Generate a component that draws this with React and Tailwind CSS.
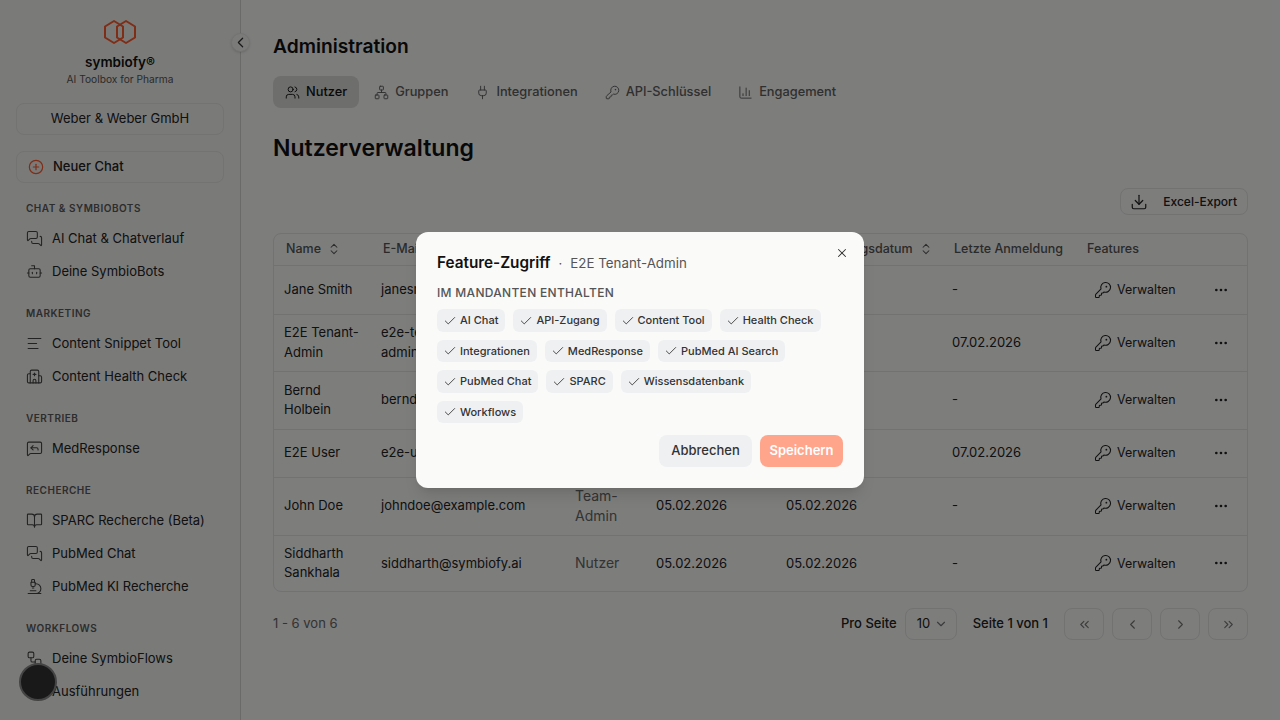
import React from "react";
import { MessagesSquare, Bot, AlignLeft, Hospital, MessageSquareReply, BookOpen, Microscope, Workflow, Play, Users, Network, Plug, KeyRound, ChartColumn, Check, X, Download, ChevronsUpDown, Ellipsis, ChevronDown, ChevronsLeft, ChevronsRight, ChevronLeft, ChevronRight, CirclePlus } from "lucide-react";

const sections = [
  ["CHAT & SYMBIOBOTS", [[MessagesSquare, "AI Chat & Chatverlauf"], [Bot, "Deine SymbioBots"]]],
  ["MARKETING", [[AlignLeft, "Content Snippet Tool"], [Hospital, "Content Health Check"]]],
  ["VERTRIEB", [[MessageSquareReply, "MedResponse"]]],
  ["RECHERCHE", [[BookOpen, "SPARC Recherche (Beta)"], [MessagesSquare, "PubMed Chat"], [Microscope, "PubMed KI Recherche"]]],
  ["WORKFLOWS", [[Workflow, "Deine SymbioFlows"], [Play, "Ausführungen"]]],
];

const tabs = [
  [Users, "Nutzer", true],
  [Network, "Gruppen"],
  [Plug, "Integrationen"],
  [KeyRound, "API-Schlüssel"],
  [ChartColumn, "Engagement"],
];

const rows = [
  ["h-[49px]", "Jane Smith", "janesmith@example.com", "Nutzer", "05.02.2026", "05.02.2026", "-"],
  ["h-[57px]", "E2E Tenant-Admin", "e2e-tenant-admin@symbiofy.ai", "Team-Admin", "05.02.2026", "05.02.2026", "07.02.2026"],
  ["h-[58px]", "Bernd Holbein", "bernd@symbiofy.ai", "Nutzer", "05.02.2026", "05.02.2026", "-"],
  ["h-[48px]", "E2E User", "e2e-user@symbiofy.ai", "Nutzer", "05.02.2026", "05.02.2026", "07.02.2026"],
  ["h-[58px]", "John Doe", "johndoe@example.com", "Team-Admin", "05.02.2026", "05.02.2026", "-"],
  ["h-[56px]", "Siddharth Sankhala", "siddharth@symbiofy.ai", "Nutzer", "05.02.2026", "05.02.2026", "-"],
];

const features = [
  ["AI Chat", "API-Zugang", "Content Tool", "Health Check"],
  ["Integrationen", "MedResponse", "PubMed AI Search"],
  ["PubMed Chat", "SPARC", "Wissensdatenbank"],
  ["Workflows"],
];

function Logo() {
  return (
    <svg width="32" height="24" viewBox="0 0 32 24" fill="none" stroke="#ff5a2c" strokeWidth="2" strokeLinejoin="round">
      <path d="M10 1 L19 6.5 V17.5 L10 23 L1 17.5 V6.5 Z" />
      <path d="M22 1 L31 6.5 V17.5 L22 23 L13 17.5 V6.5 Z" />
    </svg>
  );
}

function SortHead({ children }) {
  return (
    <span className="inline-flex items-center gap-[6px]">
      {children}
      <ChevronsUpDown size={14} strokeWidth={1.75} />
    </span>
  );
}

export default function App() {
  return (
    <div className="relative flex h-screen w-full overflow-hidden bg-[#fafaf9] font-['Inter',sans-serif] text-[#1c1c1c]">
      <aside className="relative flex w-[241px] shrink-0 flex-col border-r border-[#d4d4d2] bg-[#f4f4f2] px-4">
        <div className="flex flex-col items-center pt-5">
          <Logo />
          <div className="mt-[8px] text-[13.5px] leading-5 font-semibold text-[#111]">symbiofy®</div>
          <div className="text-[10.2px] leading-[15px] text-[#555]">AI Toolbox for Pharma</div>
        </div>
        <div className="mt-[16px] flex h-8 items-center justify-center rounded-lg border border-[#e6e6e4] text-[13px] text-[#222]">Weber &amp; Weber GmbH</div>
        <div className="mt-4 flex h-8 items-center gap-[9px] rounded-lg border border-[#e6e6e4] pl-[11px] text-[13px] font-medium text-[#222]">
          <CirclePlus size={16} strokeWidth={1.75} className="text-[#ff5a2c]" />
          Neuer Chat
        </div>
        <nav className="mt-[17px] flex flex-col gap-[17px]">
          {sections.map(([label, items]) => (
            <div key={label}>
              <div className="mb-[6px] pl-[10px] text-[10px] leading-4 font-semibold tracking-[0.05em] text-[#5a5a5a]">{label}</div>
              {items.map(([Icon, text]) => (
                <div key={text} className="flex h-[33px] items-center gap-[9px] pl-[10px] text-[13px] text-[#222]">
                  <Icon size={17} strokeWidth={1.5} className="text-[#444]" />
                  {text}
                </div>
              ))}
            </div>
          ))}
        </nav>
        <button className="absolute top-[33px] -right-[10px] flex h-[19px] w-[19px] items-center justify-center rounded-full border border-[#e8e8e6] bg-[#f7f7f5] text-[#333] shadow-sm">
          <ChevronLeft size={17} strokeWidth={1.75} />
        </button>
      </aside>

      <main className="flex min-w-0 flex-1 flex-col pt-[34px] pr-8 pl-8">
        <h1 className="text-[19.2px] leading-6 font-semibold text-[#111]">Administration</h1>
        <div className="mt-[18px] flex gap-[3px]">
          {tabs.map(([Icon, text, active]) => (
            <div key={text} className={"flex h-8 items-center gap-[6px] rounded-lg px-3 text-[12.8px] font-medium " + (active ? "bg-[#dcdcda] text-[#111]" : "text-[#5f5f5f]")}>
              <Icon size={15} strokeWidth={1.5} />
              {text}
            </div>
          ))}
        </div>
        <h2 className="mt-[24px] text-[23px] leading-8 font-semibold text-[#111]">Nutzerverwaltung</h2>
        <div className="mt-[24px] flex justify-end">
          <button className="flex h-[27px] w-[128px] items-center justify-between rounded-lg border border-[#e4e4e2] pr-[10px] pl-[9px] text-xs font-medium text-[#222]">
            <Download size={18} strokeWidth={1.6} />
            Excel-Export
          </button>
        </div>
        <div className="mt-[18px] overflow-hidden rounded-lg border border-[#e4e4e2]">
          <table className="w-full table-fixed border-collapse text-[13px] leading-[19.5px]">
            <colgroup>
              <col className="w-[97px]" />
              <col className="w-[194px]" />
              <col className="w-[81px]" />
              <col className="w-[130px]" />
              <col className="w-[166px]" />
              <col className="w-[143px]" />
              <col className="w-[110px]" />
              <col />
            </colgroup>
            <thead>
              <tr className="h-[31px] border-b border-[#e4e4e2] text-left text-[12.5px] font-medium text-[#555]">
                <th className="px-3 pb-[1px] font-medium"><SortHead>Name</SortHead></th>
                <th className="px-3 pb-[1px] font-medium"><SortHead>E-Mail</SortHead></th>
                <th className="px-3 pb-[1px] font-medium">Rolle</th>
                <th className="px-3 pb-[1px] font-medium"><SortHead>Erstellt</SortHead></th>
                <th className="px-3 pb-[1px] font-medium whitespace-nowrap"><SortHead>Registrierungsdatum</SortHead></th>
                <th className="px-3 pb-[1px] font-medium whitespace-nowrap">Letzte Anmeldung</th>
                <th className="pb-[1px] pl-[2px] font-medium">Features</th>
                <th></th>
              </tr>
            </thead>
            <tbody>
              {rows.map(([h, name, mail, role, a, b, c]) => (
                <tr key={name} className={h + " border-b border-[#e4e4e2] last:border-b-0"}>
                  <td className="px-[10px] text-[#222]">{name}</td>
                  <td className="px-[10px] break-words text-[#222]">{mail}</td>
                  <td className="px-[10px] text-sm leading-5 text-[#666]">{role}</td>
                  <td className="px-[10px] text-[#222]">{a}</td>
                  <td className="px-[10px] text-[#222]">{b}</td>
                  <td className="px-[10px] text-[#222]">{c}</td>
                  <td className="pl-[9px]">
                    <span className="flex items-center gap-[5px] text-[12.4px] font-normal text-[#222]">
                      <KeyRound size={18} strokeWidth={1.4} />
                      Verwalten
                    </span>
                  </td>
                  <td className="pl-[18px]"><Ellipsis size={16} className="text-[#222]" /></td>
                </tr>
              ))}
            </tbody>
          </table>
        </div>
        <div className="mt-4 flex h-8 items-center justify-between text-[13px]">
          <span className="text-[#666]">1 - 6 von 6</span>
          <div className="flex items-center font-medium text-[#222]">
            <span>Pro Seite</span>
            <div className="ml-2 flex h-8 w-[52px] items-center justify-between rounded-lg border border-[#e4e4e2] pr-2 pl-[11px] font-normal">
              <span>10</span>
              <ChevronDown size={14} className="text-[#777]" />
            </div>
            <span className="ml-4">Seite 1 von 1</span>
            <div className="ml-4 flex gap-2 text-[#777]">
              {[ChevronsLeft, ChevronLeft, ChevronRight, ChevronsRight].map((Icon, i) => (
                <div key={i} className="flex h-8 w-10 items-center justify-center rounded-lg border border-[#e4e4e2]">
                  <Icon size={15} strokeWidth={1.75} />
                </div>
              ))}
            </div>
          </div>
        </div>
      </main>

      <div className="absolute top-[663px] left-[19px] h-[38px] w-[38px] rounded-full border-2 border-[#888] bg-[#333]" />

      <div className="absolute inset-0 flex items-center justify-center bg-black/50">
        <div className="relative w-[448px] rounded-xl bg-[#fafaf9] p-[21px] shadow-lg">
          <X size={14} strokeWidth={1.75} className="absolute top-[14px] right-[15px] text-[#333]" />
          <div className="flex items-baseline text-[#111]">
            <span className="text-[15.3px] leading-5 font-semibold">Feature-Zugriff</span>
            <span className="mx-[8px] text-[13px] text-[#555]">·</span>
            <span className="text-[13.35px] leading-5 text-[#555]">E2E Tenant-Admin</span>
          </div>
          <div className="mt-3 text-xs leading-4 font-medium tracking-[0.025em] text-[#555]">IM MANDANTEN ENTHALTEN</div>
          <div className="mt-2 flex flex-col gap-2">
            {features.map((row, i) => (
              <div key={i} className="flex gap-2">
                {row.map((f) => (
                  <span key={f} className="flex h-[22.5px] items-center gap-[3px] rounded-md bg-[#eff0f2] pr-[7px] pl-[6px] text-[11px] font-medium text-[#333]">
                    <Check size={14} strokeWidth={1.5} />
                    {f}
                  </span>
                ))}
              </div>
            ))}
          </div>
          <div className="mt-3 flex justify-end gap-2">
            <button className="flex h-8 w-[93px] items-center justify-center rounded-lg bg-[#eff0f2] pb-[1px] text-[13px] font-medium text-[#333]">Abbrechen</button>
            <button className="flex h-8 w-[83px] items-center justify-center rounded-lg bg-[#ffa58c] pb-[1px] text-[13px] font-semibold text-white">Speichern</button>
          </div>
        </div>
      </div>
    </div>
  );
}
